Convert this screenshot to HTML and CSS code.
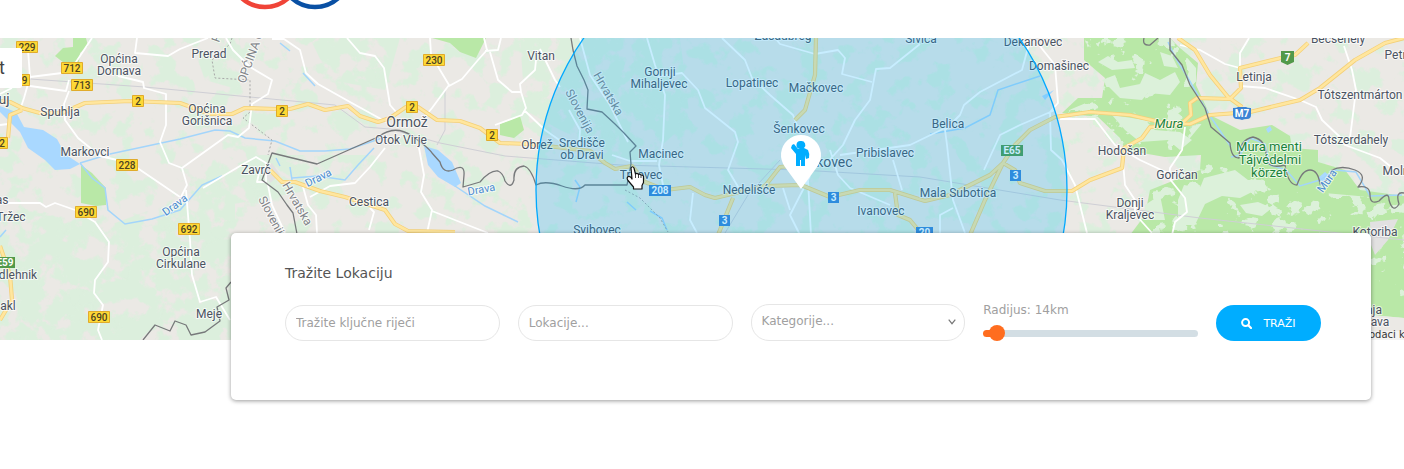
FILE: index.html
```html
<!DOCTYPE html>
<html lang="hr">
<head>
<meta charset="utf-8">
<title>Tražite Lokaciju</title>
<link rel="stylesheet" href="styles.css">
</head>
<body>
<header class="header">
  <svg class="logo" viewBox="0 0 110 10" aria-hidden="true">
    <circle cx="27" cy="-28" r="35" fill="none" stroke="#f04438" stroke-width="4.5"/>
    <circle cx="77" cy="-28" r="35" fill="none" stroke="#0950a4" stroke-width="4.5"/>
  </svg>
</header>
<main>
<section class="map" aria-label="Karta">
<svg class="map-canvas" viewBox="0 38 1404 302" preserveAspectRatio="xMidYMid slice">
  <defs>
    <filter id="woods" x="0" y="0" width="100%" height="100%" color-interpolation-filters="sRGB">
      <feTurbulence type="fractalNoise" baseFrequency=".045" numOctaves="4" seed="7"/>
      <feColorMatrix values="0 0 0 0 .862  0 0 0 0 .937  0 0 0 0 .867  12 0 0 0 -6.4"/>
      <feComposite in2="SourceAlpha" operator="in"/>
    </filter>
    <filter id="dense" x="0" y="0" width="100%" height="100%" color-interpolation-filters="sRGB">
      <feTurbulence type="fractalNoise" baseFrequency=".05" numOctaves="4" seed="3"/>
      <feColorMatrix values="0 0 0 0 .862  0 0 0 0 .937  0 0 0 0 .867  10 0 0 0 -4.1"/>
      <feComposite in2="SourceAlpha" operator="in"/>
    </filter>
    <filter id="clearing" x="0" y="0" width="100%" height="100%" color-interpolation-filters="sRGB">
      <feTurbulence type="fractalNoise" baseFrequency=".06" numOctaves="4" seed="11"/>
      <feColorMatrix values="0 0 0 0 .862  0 0 0 0 .945  0 0 0 0 .855  25 0 0 0 -14.8"/>
      <feComposite in2="SourceAlpha" operator="in"/>
    </filter>
    <path id="main-roads" d="M0 101L10 102L22 108L40 113H62L85 103L130 101L180 103L210 114H232L245 108L277 109H290L308 104L325 110L348 106L360 116L378 122L390 118L406 107H418L437 120L460 121L480 128L500 143L530 144L590 151L605 163L615 169L632 166L645 182L665 190L690 187L705 195L715 198L740 192L765 186L801 185L830 197L860 190H890L925 201L950 195L990 175L1003 163L1015 170L1020 183L1045 191H1072L1090 180L1122 168L1124 148L1142 138L1150 127L1180 125L1191 115L1190 103L1197 98L1232 99M22 110L10 115L8 138M765 186L780 167L800 165M816 38L815 75L805 110L795 120M718 235L733 198M895 193L898 215L910 220L920 232M970 235L985 200L1003 163L1015 145L1030 130L1055 117L1090 112L1130 115L1160 122L1190 124L1210 115L1250 112L1300 100L1320 88L1355 60L1385 43L1404 38M1178 38L1195 50L1210 75L1228 97L1242 107M1230 99L1241 88L1240 68L1285 57L1295 55L1308 43M270 170L282 182H295L320 191L345 197L385 210L395 224L408 231L455 232M0 246L10 275L12 300L0 320"/>
  </defs>
  <rect y="38" width="1404" height="302" fill="#ebe9e5"/>
  <rect y="38" width="1404" height="302" filter="url(#woods)"/>
  <path filter="url(#dense)" d="M0 215L60 212L110 225L150 210L235 190V340H0ZM190 38H240V90L205 80ZM310 38H400L385 90L330 80ZM520 38H680L690 120L640 165L560 130L525 110ZM180 185L260 155L370 155L340 185L200 210Z"/>

  <g fill="#b9e8a7">
    <path d="M63 48L73 47V38H86L88 46L80 53L79 62L68 66L55 56ZM81 165L92 173L106 188V205L96 206L81 203ZM432 38H486L480 50L476 58L460 52L450 43ZM500 124L520 116L524 130L514 138L500 135ZM1084 38H1170L1180 48L1198 63L1196 85L1210 115L1240 130L1272 125L1290 136L1292 148L1318 150V162L1345 170L1360 190L1404 196V318L1371 315V235H1130L1145 215L1150 190L1200 170L1201 155L1165 157L1125 150L1120 138L1098 117L1062 113L1078 98L1102 98L1105 78L1084 60Z"/>
  </g>
  <path filter="url(#clearing)" d="M1084 38H1170L1196 68V90L1205 120L1180 150L1125 150L1062 113L1105 95ZM1140 235L1150 190L1210 160L1290 190L1404 200V300H1371V235Z"/>
  <path fill="#dcf1da" d="M1102 80L1115 75L1120 88L1140 84L1145 73L1160 80L1175 72L1180 82L1170 95L1148 93L1142 100L1120 98ZM1098 62L1108 56L1118 62L1132 60L1135 68L1112 70ZM1160 52L1172 56L1178 68L1164 66ZM1112 115L1145 120L1155 130L1180 132L1192 140L1180 150L1168 140L1140 142L1125 130ZM1178 200L1184 185L1200 188L1204 178L1235 170L1248 180L1262 180L1252 192L1240 198L1222 196L1205 204L1195 225H1178ZM1145 205L1160 195L1165 220H1145ZM1240 205L1258 202L1272 208L1262 216L1246 213Z"/>
  <path fill="#e2e1e1" d="M1370 222L1398 219L1388 240L1375 255L1371 245ZM262 170L272 163L280 175L270 183Z"/>
  <path fill="#ebe9e5" d="M1371 315L1404 318V340H1371Z"/>

  <g fill="#a9d8ff">
    <path d="M0 106L16 112L24 127L43 130L57 139L65 154L80 164L70 169L55 170L45 160L28 148L20 132L0 112ZM424 146L438 150L452 162L461 183L455 187L438 177L428 165ZM1318 178L1325 172L1332 178L1325 184ZM1266 129L1270 126L1272 130L1268 133ZM1042 96L1054 90L1045 100ZM80 87L83 81L86 88L81 91Z"/>
    <path fill="none" stroke="#a3d5fb" stroke-width="1.5" d="M80 163L92 178L105 188L108 210L125 224L152 219L180 210L202 185L222 176M80 163L110 154L180 139L215 130L230 131L245 138L275 141L300 151L325 151L350 149L385 137M455 186L485 206L518 222M292 178L318 176L345 180L358 165L374 148M276 158L280 166M290 167L292 180M303 73L315 86M280 43L290 51M575 180L580 187L576 202M627 202L636 210M650 211L662 218L667 230M930 134L965 128L990 115L998 90L1040 76M0 237L6 230M1168 42L1175 57L1188 78L1208 113L1231 147M1231 157L1240 155L1250 138L1265 144L1270 165L1286 170L1300 186L1320 180L1335 170L1356 172L1370 196L1402 195"/>
  </g>

  <g fill="none" stroke="#cfcfd5" stroke-width="1">
    <path d="M30 79L145 87L250 97L335 105L365 127L390 129L440 143L505 156L620 165L800 170L920 177L1060 200L1200 218L1404 240M445 90V130L437 145M725 233L748 195L780 160"/>
    <path stroke="#a8a8a8" stroke-dasharray="2 2" d="M232 38L230 44L212 60L215 78L250 80V112L243 118L272 140L268 155M625 190L640 198L660 218L668 232"/>
  </g>

  <g fill="none" stroke="#fff" stroke-width="1.8" stroke-linejoin="round">
    <path d="M28 50L30 77L24 98L20 110M30 77L62 73L76 62L92 38M30 86L66 91L69 80M69 91L64 104L65 120L78 138L100 156L130 163L158 182L180 197M137 38L135 53L168 56L180 49L208 38M118 76L143 82L144 88L166 94V125L160 142L169 163L182 168L187 185L181 197M182 168L228 135L238 137L249 128L252 104L268 94L272 80L250 67L233 50L226 38M0 94L12 88M0 125L8 124M272 39H284L300 50L306 73L318 84L350 102L390 124M347 38L360 53L375 56L384 68L390 105L397 113M430 38L431 54L440 70L449 85L432 108L422 120M449 86L462 79L478 60L487 50L484 38M485 51L498 50L501 38M490 52L498 80L512 92H521L520 84L535 70L537 50M521 92L526 108L522 115L495 125M524 110L545 130L565 144M385 148L370 167L355 183L330 186L310 197M419 148L424 175L421 192L432 210L427 233M432 211L460 222L488 233M370 208L374 212L369 230M268 185L272 205L285 233M302 183L308 205L316 215L317 233M203 188L245 163L256 157L266 163V182H257L260 169"/>
    <path d="M0 203H40L46 207L55 203L75 210L95 222L109 242L108 262L95 280L94 293L103 305L98 330L102 340M186 190L188 215L190 240L192 275L200 302L216 297L230 320M580 38L590 75L610 105L628 142M647 38L655 65L665 95L663 140L659 165L664 190M722 38L745 60L752 78L770 95L793 115L799 130M660 76L682 73L698 90L705 108L735 132L738 142L728 170L740 190M693 193L690 220L697 233M540 49L555 80L560 87M569 110L580 130L579 145M612 155L630 161H657M775 38L780 44L815 54L838 50L845 58L842 74L872 82M920 44L890 68L876 69L870 100L855 120L843 145L825 165M1030 40L1022 70L980 92L964 105L960 115L945 130L947 145L953 200L965 233M953 208L940 215V233M945 128L910 145L840 155M893 160L902 190M830 150L838 175L850 188L890 205M1055 110L1020 125L1000 135L984 170M1035 40L1055 65L1058 103L1050 112L1051 150L1062 160L1075 185L1087 233M810 176L790 215L800 235M783 188L790 210M808 180L811 235"/>
    <path d="M1060 119H1095L1115 145L1140 160L1170 174M1185 127L1182 150L1170 168L1169 178L1185 198L1187 212L1175 222L1172 235M1122 150L1125 185L1135 200V214L1152 233M1180 45L1200 50L1225 64L1240 68M1249 38L1240 53V68M1240 86L1265 88L1300 100L1316 107L1322 120L1340 137L1345 145L1380 158L1395 170M1344 46L1352 70L1356 90L1350 138"/>
  </g>

  <g fill="none" stroke-linejoin="round">
    <use href="#main-roads" stroke="#f4d078" stroke-width="4.2"/>
    <use href="#main-roads" stroke="#ffe69e" stroke-width="2.6"/>
  </g>

  <path fill="none" stroke="#77797b" stroke-width="1.3" stroke-linejoin="round" d="M297 234L293 213L287 205L278 192L262 180L265 172L272 153L317 164L378 137Q395 124 412 136T432 153L440 162Q443 174 453 170Q465 163 464 175L463 187L480 182Q490 170 498 171Q503 173 505 181Q511 190 514 180Q513 167 524 166Q531 168 536 185Q545 180 562 186T585 185H627L631 164L630 152L636 146L624 133L615 124L602 112L587 109L588 90L584 80L577 66L573 50L571 38M231 282L226 288L229 300L217 307L220 321L205 332L191 335L186 325L175 321L170 331L155 325L143 340M1144 38Q1142 46 1150 45L1158 38M1170 38V50L1182 65L1190 85L1205 108L1211 127L1230 143Q1231 158 1239 158Q1239 140 1253 137Q1266 140 1266 155T1285 165Q1288 185 1297 185Q1302 170 1310 170T1320 184Q1329 181 1332 170Q1342 165 1355 170T1358 187Q1370 185 1370 195T1379 201Q1389 190 1389 200Q1393 214 1399 204Q1395 191 1404 193"/>

  <g class="labels">
    <text x="209" y="58">Prerad</text><text x="119" y="63">Općina</text><text x="119" y="75">Dornava</text>
    <text x="60" y="116">Spuhlja</text><text x="207" y="113">Općina</text><text x="207" y="125">Gorišnica</text>
    <text x="85" y="156">Markovci</text><text x="256" y="174">Zavrč</text><text x="2" y="204">as</text>
    <text x="11" y="221">Tržec</text><text x="18" y="279">dlehnik</text><text x="8" y="310">akl</text>
    <text x="181" y="256">Općina</text><text x="181" y="268">Cirkulane</text><text x="209" y="318">Meje</text>
    <text x="401" y="144">Otok Virje</text><text x="369" y="206">Cestica</text><text x="541" y="60">Vitan</text>
    <text x="537" y="149">Obrež</text><text x="660" y="76">Gornji</text><text x="659" y="88">Mihaljevec</text>
    <text x="752" y="87">Lopatinec</text><text x="816" y="92">Mačkovec</text><text x="799" y="133">Šenkovec</text>
    <text x="582" y="147">Središče</text><text x="582" y="159">ob Dravi</text><text x="661" y="158">Macinec</text>
    <text x="641" y="179">Trnovec</text><text x="749" y="194">Nedelišće</text><text x="597" y="234">Svibovec</text>
    <text x="783" y="40">Zasadbreg</text><text x="921" y="43">Sivica</text><text x="1033" y="46">Dekanovec</text>
    <text x="1059" y="70">Domašinec</text><text x="948" y="128">Belica</text><text x="885" y="157">Pribislavec</text>
    <text x="958" y="197">Mala Subotica</text><text x="881" y="215">Ivanovec</text><text x="1338" y="43">Becsehely</text>
    <text x="1397" y="59">Petri</text><text x="1254" y="81">Letinja</text><text x="1360" y="99">Tótszentmárton</text>
    <text x="1351" y="144">Tótszerdahely</text><text x="1122" y="155">Hodošan</text><text x="1177" y="179">Goričan</text>
    <text x="1130" y="207">Donji</text><text x="1130" y="219">Kraljevec</text><text x="1375" y="236">Kotoriba</text>
    <text x="1396" y="175">Moln</text><text x="1374" y="314">nja</text><text x="1380" y="326">ava</text>
    <g class="town"><text x="4" y="104">uj</text><text x="407" y="127">Ormož</text><text x="826" y="167">Čakovec</text></g>
    <g class="park"><text x="1169" y="128" font-style="italic">Mura</text><text x="1269" y="151">Mura menti</text><text x="1270" y="164">Tájvédelmi</text><text x="1269" y="177">körzet</text></g>
    <g class="river"><text transform="translate(177 208) rotate(-36)">Drava</text><text transform="translate(320 181) rotate(-27)">Drava</text><text transform="translate(482 193) rotate(-10)">Drava</text><text transform="translate(1330 183) rotate(-55)">Mura</text></g>
    <g class="region"><text transform="translate(245 84) rotate(-70)">OPĆINA O</text><text transform="translate(219 43) rotate(-70)">P</text><text transform="translate(282 185) rotate(60)">Hrvatska</text><text transform="translate(258 199) rotate(62)">Slovenija</text><text transform="translate(593 75) rotate(60)">Hrvatska</text><text transform="translate(565 92) rotate(62)">Slovenija</text></g>
  </g>

  <g fill="#fdd835" stroke="#e0ab2c">
    <path d="M16.500 41.500h21v11h-21zM61.500 62.500h21v11h-21zM71.500 79.500h21v11h-21zM8.500 74.500h21v11h-21zM132.500 95.500h11v11h-11zM-4.500 137.500h12v11h-12zM276.500 105.500h11v11h-11zM116.500 159.500h21v11h-21zM75.500 206.500h21v11h-21zM178.500 223.500h21v11h-21zM88.500 311.500h21v11h-21zM423.500 54.500h21v11h-21zM406.500 101.500h11v11h-11zM486.500 129.500h11v11h-11z"/>
  </g>
  <g fill="#3b83d4"><path d="M649 185h22v11h-22zM719 215h11v11h-11zM828 192h11v11h-11zM1010 170h11v11h-11zM916 227h17v11h-17zM1233 108q4 0 5-1h8q1 1 5 1v7q0 4-4 4-3 0-5 1-2-1-5-1-4 0-4-4z"/><path fill="#52994a" d="M1001 145h22v11h-22zM-7 257h22v11H-7zM1281 51h13v11l-6.500 3-6.500-3z"/></g>
  <g class="numbers">
    <text x="27" y="51">229</text><text x="72" y="72">712</text><text x="82" y="89">713</text><text x="19" y="84">229</text><text x="138" y="105">2</text><text x="2" y="147">2</text><text x="282" y="115">2</text><text x="127" y="169">228</text><text x="86" y="216">690</text><text x="189" y="233">692</text><text x="99" y="321">690</text><text x="434" y="64">230</text><text x="412" y="111">2</text><text x="492" y="139">2</text>
    <g class="light"><text x="660" y="194">208</text><text x="724.500" y="224">3</text><text x="833.500" y="201">3</text><text x="1015.500" y="179">3</text><text x="924.500" y="236">20</text><text x="1242" y="117">M7</text><text x="1012" y="154">E65</text><text x="5" y="266">E59</text><text x="1287.500" y="61">7</text></g>
  </g>

  <circle cx="801.500" cy="190" r="265.500" fill="#00adff" fill-opacity=".22" stroke="#00a8ff" stroke-width="1.300"/>

  <path fill="#fff" d="M801 189L785 167A20 20 0 1 1 817 167Z"/>
  <path fill="#00adff" d="M801 141a4 4 0 0 1 3 7l4 2q2 4 1 8l-3 1-1-4v11h-4v-6h-1v6h-4v-12l-5-6 1-3 2-1 4 5h2a4 4 0 0 1 1-8z"/>
  <path fill="#fff" stroke="#111" stroke-width="1.200" stroke-linejoin="round" d="M631 168q1.500-2.500 3 0l1.500 6q1.500-1.500 3 .5 1.500-1 2.500.8 2-.8 2.500 1.200v6l-1.500 3v3.500h-8.500v-2l-5.500-6.500q-2-3 .5-4 2-.3 3.500 2.500z"/>
  <path fill="none" stroke="#111" stroke-width=".8" d="M635.500 174v4M638.500 175v3M641 176v2"/>

  <rect x="1371" y="331" width="33" height="9" fill="#f5f5f5" fill-opacity=".8"/>
  <text class="credit" x="1369" y="338">odaci k</text>
  <path fill="#fff" d="M0 48H20Q22 48 22 50V86Q22 88 20 88H0Z"/>
  <text class="control" x="-1" y="74">t</text>
</svg>
</section>
<form class="search">
  <h1 class="title">Tražite Lokaciju</h1>
  <div class="fields">
    <input class="field" type="text" placeholder="Tražite ključne riječi" aria-label="Tražite ključne riječi">
    <input class="field" type="text" placeholder="Lokacije..." aria-label="Lokacije">
    <div class="select">
      <select class="field" aria-label="Kategorije"><option>Kategorije...</option></select>
      <svg class="chevron" viewBox="0 0 8 6" aria-hidden="true"><path d="M.7.700 4 4.700 7.300.700" fill="none" stroke="#777" stroke-width="1.200"/></svg>
    </div>
    <div class="radius">
      <label for="radius">Radijus: 14km</label>
      <input class="slider" id="radius" type="range" min="0" max="500" value="14">
    </div>
    <button class="submit" type="button">
      <svg class="glass" viewBox="0 0 11 11" aria-hidden="true"><circle cx="4.600" cy="4.600" r="3.500" fill="none" stroke="#fff" stroke-width="2"/><path d="M7.300 7.300 10 10" stroke="#fff" stroke-width="2.200" stroke-linecap="round"/></svg>
      TRAŽI
    </button>
  </div>
</form>
</main>
</body>
</html>
```

FILE: styles.css
```css
* { box-sizing: border-box; }
body { margin: 0; min-height: 100vh; background: #fff; color: #555; font: 12px/16px "DejaVu Sans", Verdana, sans-serif; }
.header { height: 38px; padding-left: 238px; }
.logo { display: block; width: 110px; height: 10px; }
main { padding-bottom: 32px; }
.map { height: 302px; overflow: hidden; }
.map-canvas { display: block; width: 100%; height: 100%; }
.labels { font: 12px Roboto, sans-serif; fill: #4b5362; text-anchor: middle; }
.labels text { paint-order: stroke; stroke: #fff; stroke-opacity: .7; stroke-width: 2px; stroke-linejoin: round; }
.town { font-size: 14px; }
.park { font-size: 13px; fill: #19833c; }
.river { font-size: 11px; fill: #4a8bd0; }
.region { font-size: 12px; fill: #808388; text-anchor: start; }
.numbers { font: 500 10px Roboto, sans-serif; fill: #4c4322; text-anchor: middle; }
.light { font-weight: 700; fill: #fff; }
.credit { font: 10px "DejaVu Sans", sans-serif; fill: #333; }
.control { font: 18px Roboto, sans-serif; fill: #444; }

.search { position: relative; margin: -107px 33px 0 231px; padding: 30px 50px 59px 54px; background: #fff; border-radius: 5px; box-shadow: 0 1px 4px rgba(0, 0, 0, .4); }
.title { margin: 0 0 20px; font-size: 14px; line-height: 20px; font-weight: 400; color: #555; }
.fields { display: grid; grid-template-columns: repeat(4, minmax(0, 1fr)) 105px; gap: 18px; align-items: end; }
.field { display: block; width: 100%; height: 36px; padding: 0 10px; border: 1px solid #e6e6e6; border-radius: 18px; outline: 0; background: #fff; color: #a0a0a0; font: inherit; }
.field::placeholder { color: #a0a0a0; opacity: 1; }
.select { position: relative; }
.select .field { height: 37px; padding: 0 24px 3px 10px; appearance: none; }
.chevron { position: absolute; right: 9px; top: 15px; width: 8px; height: 6px; }
.radius { display: flex; flex-direction: column; align-self: start; color: #a0a0a0; }
.radius label { line-height: 14px; }
.slider { width: 100%; height: 16px; margin: 8px 0 0; appearance: none; background: none; }
.slider::-webkit-slider-runnable-track { height: 7px; border-radius: 4px; background: linear-gradient(90deg, #ff6d1f 14px, #d3dee4 14px); }
.slider::-webkit-slider-thumb { appearance: none; width: 16px; height: 16px; margin-top: -5px; border-radius: 50%; background: #ff6d1f; }
.submit { display: flex; align-items: center; justify-content: center; gap: 11px; height: 36px; padding: 0; border: 0; border-radius: 18px; background: #00adff; color: #fff; font: 11px "DejaVu Sans", Verdana, sans-serif; }
.glass { width: 11px; height: 11px; }
```
